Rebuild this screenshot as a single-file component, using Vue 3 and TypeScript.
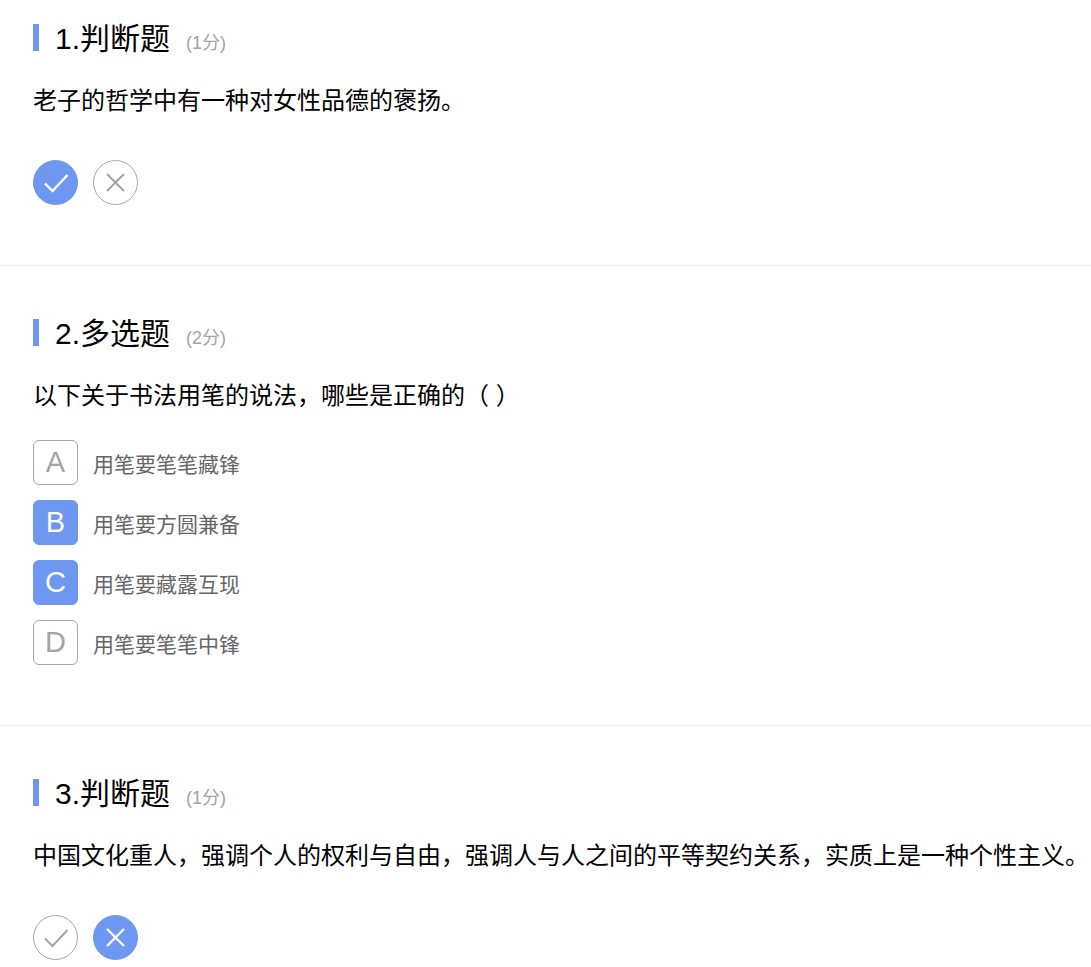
<script setup lang="ts">
interface Option { key: string; text: string; on: boolean }
const options: Option[] = [
  { key: 'A', text: '用笔要笔笔藏锋', on: false },
  { key: 'B', text: '用笔要方圆兼备', on: true },
  { key: 'C', text: '用笔要藏露互现', on: true },
  { key: 'D', text: '用笔要笔笔中锋', on: false },
]
</script>

<template>
  <main class="page">
    <section class="q q1">
      <h2 class="title"><span class="name">1.判断题</span><span class="score">(1分)</span></h2>
      <p class="stem">老子的哲学中有一种对女性品德的褒扬。</p>
      <div class="judge">
        <span class="round on"><svg viewBox="0 0 45 45"><path d="M12 23.5 19.5 31 34.5 15" /></svg></span>
        <span class="round"><svg viewBox="0 0 45 45"><path d="M14 14 31 31M31 14 14 31" /></svg></span>
      </div>
    </section>
    <section class="q q2">
      <h2 class="title"><span class="name">2.多选题</span><span class="score">(2分)</span></h2>
      <p class="stem">以下关于书法用笔的说法，哪些是正确的（ ）</p>
      <ul class="opts">
        <li v-for="o in options" :key="o.key" class="opt">
          <span class="box" :class="{ on: o.on }">{{ o.key }}</span>
          <span class="txt">{{ o.text }}</span>
        </li>
      </ul>
    </section>
    <section class="q q3">
      <h2 class="title"><span class="name">3.判断题</span><span class="score">(1分)</span></h2>
      <p class="stem">中国文化重人，强调个人的权利与自由，强调人与人之间的平等契约关系，实质上是一种个性主义。</p>
      <div class="judge">
        <span class="round"><svg viewBox="0 0 45 45"><path d="M12 23.5 19.5 31 34.5 15" /></svg></span>
        <span class="round on"><svg viewBox="0 0 45 45"><path d="M14 14 31 31M31 14 14 31" /></svg></span>
      </div>
    </section>
  </main>
</template>

<style>
html, body { background: #fff; }
</style>

<style scoped>
.page {
  width: 1091px;
  height: 967px;
  overflow: hidden;
  font-family: "Liberation Sans", "Noto Sans CJK SC", sans-serif;
  color: #000;
}
.q { box-sizing: border-box; padding: 0 0 0 33px; border-bottom: 1px solid #eeeeee; }
.q1 { height: 266px; padding-top: 17px; }
.q2 { height: 460px; padding-top: 46px; }
.q3 { border-bottom: 0; padding-top: 46px; }
.title {
  margin: 0;
  display: flex;
  align-items: center;
  height: 42px;
  font-weight: 400;
  position: relative;
  padding-left: 22px;
}
.title::before {
  content: "";
  position: absolute;
  left: 0;
  top: 7px;
  width: 6px;
  height: 27px;
  background: #6d97f0;
}
.name { font-size: 30px; line-height: 42px; padding-top: 2px; }
.score { font-size: 18px; color: #a3a3a3; margin-left: 16px; padding-top: 6px; }
.stem { margin: 21px 0 0; font-size: 24px; line-height: 42px; white-space: nowrap; }
.judge { display: flex; gap: 15px; margin-top: 38px; }
.round {
  box-sizing: border-box;
  width: 45px;
  height: 45px;
  border-radius: 50%;
  border: 1px solid #a6a6a6;
  position: relative;
  background: #fff;
}
.round svg {
  position: absolute;
  left: -1px;
  top: -1px;
  width: 45px;
  height: 45px;
  fill: none;
  stroke: #a3a3a3;
  stroke-width: 2;
}
.round.on { background: #6d97f0; border-color: #6d97f0; }
.round.on svg { stroke: #fff; stroke-width: 2.4; }
.opts { list-style: none; margin: 23px 0 0; padding: 0; display: flex; flex-direction: column; gap: 15px; }
.opt { display: flex; align-items: center; height: 45px; }
.box {
  box-sizing: border-box;
  width: 45px;
  height: 45px;
  border: 1px solid #a6a6a6;
  border-radius: 6px;
  color: #a3a3a3;
  font-size: 29px;
  line-height: 43px;
  text-align: center;
}
.box.on { background: #6d97f0; border-color: #6d97f0; color: #fff; }
.txt { margin-left: 15px; font-size: 21px; color: #666; line-height: 30px; padding-top: 5px; }
</style>
